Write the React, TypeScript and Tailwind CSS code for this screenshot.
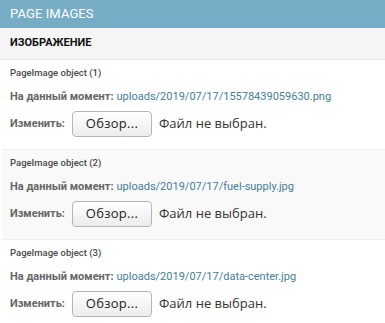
import React from "react";

const ITEMS = [
  { n: 1, file: "uploads/2019/07/17/15578439059630.png", bg: "bg-white" },
  { n: 2, file: "uploads/2019/07/17/fuel-supply.jpg", bg: "bg-[#f9f9f9]" },
  { n: 3, file: "uploads/2019/07/17/data-center.jpg", bg: "bg-white" },
];

export default function App() {
  return (
    <div className="w-[385px] h-[323px] overflow-hidden bg-white font-['Roboto',sans-serif]">
      <h2 className="h-[28px] bg-[#77acc7] px-[10px] text-[13px] leading-[28px] text-white uppercase tracking-[0.1px]">
        Page images
      </h2>
      <div className="h-[32px] bg-[#f5f5f5] border-b border-[#e8e8e8] px-[10px] flex items-center">
        <h3 className="text-[11px] font-bold text-[#111] uppercase">Изображение</h3>
      </div>
      {ITEMS.map((it) => (
        <div key={it.n} className={`h-[90px] ${it.bg} border-b border-[#eee] ml-[2px] px-[8px]`}>
          <div className="h-[24px] flex items-center pt-[2px] text-[9.5px] font-medium text-[#4a4a4a]">
            PageImage object ({it.n})
          </div>
          <div className="h-[26px] flex items-center text-[11px]">
            <span className="font-bold text-[#666] mr-[3px]">На данный момент:</span>
            <a href="#" className="text-[#447e9b]">{it.file}</a>
          </div>
          <div className="h-[28px] flex items-center">
            <span className="w-[62px] text-[11px] font-bold text-[#666]">Изменить:</span>
            <span className="h-[26px] w-[80px] flex items-center justify-center rounded-[4px] border border-[#b5b5b5] bg-gradient-to-b from-white to-[#ececec] text-[13px] tracking-[0.3px] text-[#222] font-['Open_Sans',sans-serif]">
              Обзор...
            </span>
            <span className="ml-[7px] text-[13px] text-[#333] font-['Open_Sans',sans-serif]">Файл не выбран.</span>
          </div>
        </div>
      ))}
    </div>
  );
}
